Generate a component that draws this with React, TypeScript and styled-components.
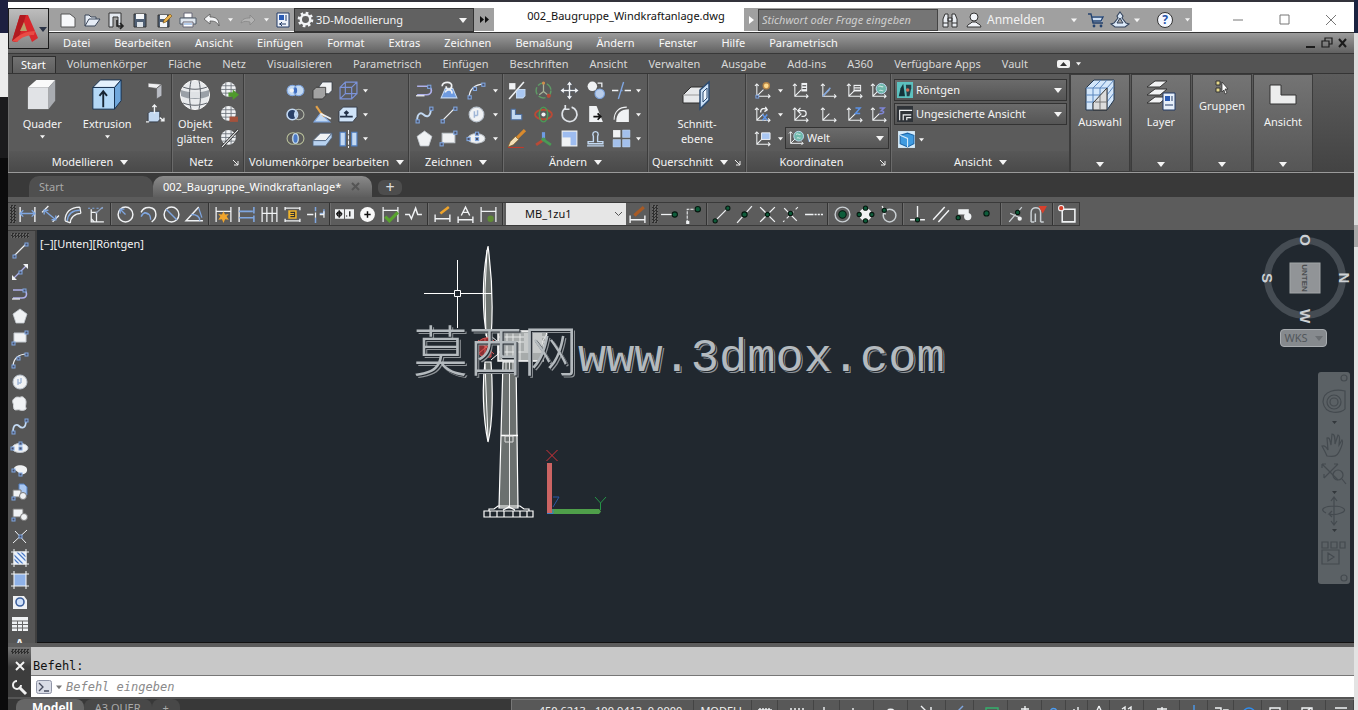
import React from "react";
import styled, { createGlobalStyle, css } from "styled-components";

const GlobalStyle = createGlobalStyle`
  *, *::before, *::after { box-sizing: border-box; }
  body {
    margin: 0;
    background: #3a3a3a;
    color: #eee;
    font: 11px/16px "Noto Sans", "Open Sans", sans-serif;
  }
  button, select, input {
    margin: 0; padding: 0; border: 0; border-radius: 0; background: none;
    color: inherit; font: inherit; outline: 0;
  }
  svg { display: block; flex: none; }
`;

/* ------------------------------------------------------------------ icons */

const W = "#f0f2f4";
const L = "#c3d9f2";
const B = "#7fa6e0";
const D = "#2b3340";
const G = "#0d5c3a";
const P = "#aeb0ea";

const line = (d: string, stroke = W, width = 1.2) => (
  <path d={d} fill="none" stroke={stroke} strokeWidth={width} />
);
const dot = (x: number, y: number, r = 2) => (
  <circle cx={x} cy={y} r={r} fill={G} stroke="#06170f" strokeWidth={1} />
);
const grip = (x: number, y: number) => (
  <rect x={x - 1} y={y - 1} width={3} height={3} fill="#4b5068" stroke={B} strokeWidth={1} />
);
const ucs = (stroke = W) => line("M4 3v13h14M2 5l2-2 2 2M16 14l2 2-2 2M4 16l7-7", stroke, 1.1);

const icons: Record<string, React.ReactNode> = {
  fresh: <path d="M3 4h9l5 4v9H3z" fill="#f7f8fa" stroke="#555" />,
  open: <path d="M3 16V5h4l2 2h5v2M3 16l4-7h11l-5 7z" fill="#e6ecf5" stroke="#3b4659" />,
  saveTo: <><path d="M3 17V3h12v14h-3V7H7v10z" fill="#e4e9f0" stroke="#333" />{line("M11 10v6h5M14 13l3 3-3 3", "#222", 1.6)}</>,
  save: <><path d="M4 4h12v13H4z" fill="#4f5f74" stroke="#333" /><path d="M6 4h8v5H6z" fill="#f4f6f8" /><path d="M7 12h6v5H7z" fill="#dce2e8" /></>,
  saveAs: <><path d="M4 5h11v12H4z" fill="#4f5f74" stroke="#333" /><path d="M6 5h7v4H6zM6 12h7v5H6z" fill="#f4f6f8" /><path d="M9 13l1-3 6-6 2 2-6 6z" fill="#e8b04a" stroke="#6d4b14" strokeWidth=".6" /></>,
  print: <><path d="M6 3h8v5H6z" fill="#fff" stroke="#667" /><path d="M2 8h16v6H2z" fill="#dfe6ee" stroke="#4d5866" /><path d="M5 12h10v5H5z" fill="#fff" stroke="#667" /><path d="M6 14h8" stroke="#6d9bd8" /></>,
  undo: <path d="M2 9l6-5v3c6 0 9 2 9 9-2-4-4-5-9-5v3z" fill="#f4f5f7" stroke="#555" strokeWidth=".8" />,
  redo: <path d="M17 10l-5-5v3c-5 0-8 1-9 5 3-2 5-2 9-1v3z" fill="#b3b3b3" stroke="#868686" strokeWidth=".8" />,
  sheet: <><path d="M4 3h12v14H4z" fill="#eef3fb" stroke="#223a66" /><path d="M6 5h5v5H6z" fill="#2a5bb5" /><path d="M13 5v6M6 14h7M9 12l-2 2 2 2" fill="none" stroke="#223a66" /></>,
  gear: <><circle cx="10" cy="10" r="5" fill="none" stroke="#f2f4f6" strokeWidth="2.6" /><circle cx="10" cy="10" r="7" fill="none" stroke="#f2f4f6" strokeWidth="2.6" strokeDasharray="2.8 2.7" /></>,
  find: <path d="M3 17V9l2-5h3v13zM12 17V4h3l2 5v8zM8 8h4v3H8zM3 13h5M12 13h5" fill="#e9edf2" stroke="#333" />,
  user: <><circle cx="10" cy="7" r="4" fill="#f2f5fa" stroke="#333" /><path d="M3 17c0-3 4-3 5-5h4c1 2 5 2 5 5z" fill="#f2f5fa" stroke="#333" /></>,
  cart: <><path d="M5 6h12l-1 6H7z" fill="#cfe0f5" /><path d="M2 4h3l2 9h10M6 7h11l-2 4H7" fill="none" stroke="#24426e" strokeWidth="1.3" /><circle cx="8" cy="16" r="1.4" fill="#24426e" /><circle cx="15" cy="16" r="1.4" fill="#24426e" /></>,
  exchange: (
    <>
      <path d="M10 2l3 4-1 2 4 5 3 1-4 3H5l-4-3 3-1 4-5-1-2z" fill="#dce9f8" stroke="#33435c" strokeWidth="1.1" />
      <path d="M10 8l-3 5h6z" fill="#a0a0a0" stroke="#33435c" />
    </>
  ),

  sweep: <><path d="M3 3l13 1-5 4-8-1z" fill="#f0f0f2" stroke="#555" strokeWidth=".6" /><path d="M11 8l5-4v11l-5 3z" fill="#b9bcc4" stroke="#555" strokeWidth=".6" /></>,
  pressPull: <><path d="M3 9l2-2h9v8l-2 2H3z" fill={L} stroke={D} strokeWidth=".8" />{line("M9 9V1M7 3l2-2 2 2M1 17h3M14 13l4 3M18 13v3h-3", W, 1.3)}</>,
  meshMore: <><Globe /><path d="M9 12h4v-3l6 5-6 5v-3H9z" fill="#4f9a2c" /></>,
  meshLess: <><Globe /><path d="M10 12h8v5h-8z" fill="#a5523c" /></>,
  meshCrease: <><Globe />{line("M3 18L18 2", "#222", 2.4)}{line("M3 18L18 2", W, 1)}</>,

  union: <><circle cx="7" cy="10" r="5" fill={L} stroke={B} /><circle cx="13" cy="10" r="5" fill={L} stroke={B} /><ellipse cx="10" cy="10" rx="1.500" ry="3" fill="#3d6cc0" /><circle cx="6.500" cy="10" r="2" fill={W} /></>,
  subtract: <><circle cx="13" cy="10" r="5" fill="none" stroke="#b7bcae" /><circle cx="7" cy="10" r="5" fill="#2a4168" stroke={L} strokeWidth="1.500" /><path d="M10 6c-2 3-2 5 0 8 2-3 2-5 0-8z" fill={L} /></>,
  intersect: <><circle cx="7.500" cy="10" r="5.500" fill="none" stroke="#b9c09a" /><circle cx="12.500" cy="10" r="5.500" fill="none" stroke="#b9c09a" /><ellipse cx="10" cy="10" rx="2.500" ry="4.500" fill="#4b79c4" stroke={L} /></>,
  thicken: <><path d="M7 6l3-4h9v8l-3 3H7z" fill={W} stroke={D} strokeWidth=".7" /><path d="M1 10l3-3h9v8l-3 3H1z" fill="#a2a2a2" stroke="#333" strokeWidth=".8" /></>,
  slice: <><path d="M2 17l6-8 9 8z" fill={L} stroke={B} />{line("M4 2l4 6 4 4", "#e3a24a", 2)}{line("M8 9l10 5", W, 1.6)}</>,
  imprint: <><path d="M1 12l7-7h11l-6 7z" fill={W} stroke="#50647f" strokeWidth=".8" /><path d="M1 12h12l6-7v4l-6 8H1z" fill="#b8d2f0" stroke="#50647f" strokeWidth=".8" /></>,
  wireBox: line("M2 7h11v11H2zM7 2h11v11H7zM2 7l5-5M13 7l5-5M13 18l5-5M2 18l5-5", "#7c93d9", 1.1),
  extrudeFace: <><path d="M1 7l4-4h13v9l-4 5H1z" fill="#cfe3f8" stroke={D} strokeWidth=".8" />{line("M2 12h12M8 12V7M6 9l2-2 2 2", "#23324a", 1.6)}</>,
  mirrorAxis: <><path d="M2 4h5v13H2zM13 4h5v13h-5z" fill={L} stroke="#4e7fc4" /><path d="M10 2v17" stroke={W} strokeDasharray="4 1" /></>,

  polyline: <>{line("M3 6h9c6 0 6 8 0 8H3", P, 1.6)}{line("M2 15h8", W, 1.2)}{grip(14, 6)}</>,
  helix: <><path d="M3 17l4-9h7l4 9z" fill="#6e9be0" stroke={L} />{line("M4 6c0-5 10-5 9 0s-6 3-5 0M7 12c0-4 8-3 6 1", W, 1.6)}</>,
  arc: <>{line("M3 17C3 9 8 4 17 4", W, 1.2)}{grip(3, 16)}{grip(8, 8)}{grip(16, 4)}</>,
  spline: <>{line("M3 16c0-8 4-8 6-6s7 4 7-6", L, 1.8)}{grip(3, 16)}{grip(16, 4)}</>,
  line: <>{line("M4 16L16 4", W, 1.2)}{grip(4, 16)}{grip(16, 4)}</>,
  xline: <>{line("M3 17L17 3", P, 1.2)}<path d="M2 18v-5l5 5zM18 2v5l-5-5z" fill={W} />{grip(10, 10)}</>,
  circle: <><circle cx="10" cy="10" r="7" fill={W} stroke="#b9c2cc" /><path d="M8 7v6M11 6v5M8 11h3" stroke="#9fb6d6" strokeWidth="1.4" fill="none" /></>,
  polygon: <path d="M10 3l7 5-3 9H6L3 8z" fill={W} stroke="#c4cad0" strokeWidth=".8" />,
  rect: <><path d="M4 5h12v9H4z" fill={W} stroke="#c4cad0" />{grip(3, 15)}{grip(16, 4)}</>,
  ellipse: <><ellipse cx="10" cy="10" rx="8" ry="4.500" fill={W} stroke="#c4cad0" />{grip(10, 10)}{grip(2, 10)}{grip(10, 5)}</>,
  ellipseArc: <><path d="M4 9c0-5 12-5 13 0s-6 7-8 4z" fill={W} />{grip(3, 10)}{grip(10, 14)}</>,
  cloud: <path d="M5 4c2-2 4 0 6-1s5 2 5 5-1 4 0 6-4 3-6 2-5 1-6-1 0-4-1-6 0-4 2-5z" fill={W} stroke="#cfd2d6" />,
  insert: <><path d="M9 2h5l3 3v8H9z" fill="#a9c7f2" stroke="#5580c0" /><path d="M3 8h8v7H3z" fill={W} stroke="#777" /><circle cx="13" cy="14" r="3.500" fill={W} stroke="#777" />{grip(3, 16)}</>,
  block: <><path d="M3 5h10v8H3z" fill={W} stroke="#777" /><circle cx="14" cy="13" r="3.500" fill={W} stroke="#777" />{grip(3, 15)}</>,
  point: <>{line("M3 17L17 4M5 5l11 12", W, 1)}{grip(10, 10)}</>,
  hatch: <><path d="M4 4h12v12H4z" fill="#e9f1fc" stroke={W} />{line("M4 7l9 9M7 4l9 9M11 4l5 5M4 11l5 5", "#4b79c4", 1.2)}{line("M1 4h18M4 1v18M16 1v18M1 16h18", W, 1)}</>,
  gradient: <><path d="M4 4h12v12H4z" fill="#8fb2e8" />{line("M1 4h18M4 1v18M16 1v18M1 16h18", W, 1.1)}</>,
  region: <><path d="M3 4h11l3 4v9H3z" fill={W} /><circle cx="10" cy="10" r="4" fill="#cfe0f8" stroke="#3c5f9c" strokeWidth="1.6" /></>,
  table: <><path d="M2 3h16v14H2z" fill={W} /><path d="M2 7h16M2 10.500h16M2 14h16M7.500 7v10M12.500 7v10" stroke="#666" /></>,

  stretch: <><path d="M3 3h6v6H3z" fill={W} />{line("M17 2L3 18", W, 1.5)}<path d="M10 11l2-2h6v6l-2 2h-6z" fill="#a9c7f2" stroke={L} /></>,
  rotate3d: <><circle cx="10" cy="10" r="7" fill="none" stroke="#5f9a66" strokeWidth="1.400" strokeDasharray="7 2" />{line("M10 2v9l5 4M10 11l-4 3", "#a8b39a")}<circle cx="15" cy="15" r="2" fill="#b94a36" /><circle cx="10" cy="3" r="1.500" fill="#d08a4a" /></>,
  move: <path d="M10 1l3 4h-2v4h4V7l4 3-4 3v-2h-4v4h2l-3 4-3-4h2v-4H5v2l-4-3 4-3v2h4V5H7z" fill={W} stroke={D} strokeWidth=".5" />,
  copy: <><circle cx="7" cy="6" r="4.500" fill={W} /><circle cx="14" cy="13" r="4.500" fill="#b9cdea" stroke={B} />{line("M12 3h4v4", W)}</>,
  trim: <>{line("M1 10h6M13 10h6", W, 1.3)}{line("M12 2L7 18M9 10h2", B, 1.3)}</>,
  alignL: <path d="M5 5h4v5h6v5H5z" fill={L} stroke="#4d6fa0" />,
  orbit: <><ellipse cx="10" cy="10" rx="8" ry="4.500" fill="none" stroke="#b94a36" strokeWidth="1.800" /><ellipse cx="10" cy="10" rx="4" ry="7" fill="none" stroke="#4a9b55" strokeWidth="1.300" /><circle cx="10" cy="10" r="2" fill={W} /></>,
  rotate: line("M6 4a7 7 0 1 0 6-1M6 1v4h4", "#dfe3e8", 1.6),
  stretchFace: <><path d="M4 2h7l6 15H4z" fill={W} />{line("M8 12h7M12 9l3 3-3 3", "#111", 1.6)}</>,
  fillet: <><path d="M5 17C5 9 9 5 17 5v12z" fill={W} />{line("M3 15C3 7 8 3 15 3", W, 1)}</>,
  brush: <>{line("M18 2l-8 8", "#d98a2d", 3)}<path d="M9 8l3 3-5 5-5 2 2-5z" fill="#f2dfb8" stroke="#7c5a1c" strokeWidth=".6" />{line("M2 18.500h15", "#c0392b", 1)}</>,
  axes: <>{line("M10 4v7", "#6f9be4", 3)}{line("M9 12l-6 4", "#b94a36", 2.600)}{line("M11 12l6 4", "#4a9b55", 2.600)}<circle cx="10" cy="11" r="2" fill="#4a9b55" /></>,
  scale: <><path d="M3 3h14v14H3z" fill="#9dbcf0" stroke={W} /><path d="M3 9h8v8H3z" fill={W} /></>,
  stamp: line("M2 17h16M3 13h5V8c-3-6 7-6 4 0v5h5v2H3z", L, 1.3),
  array: <><path d="M2 2h7v7H2z" fill={W} /><path d="M11 2h7v7h-7zM2 11h7v7H2zM11 11h7v7h-7z" fill="#a3c0ec" stroke={L} strokeWidth=".5" /></>,

  ucsOrigin: <>{ucs()}<circle cx="14" cy="5" r="4" fill="#f3a13c" opacity=".6" /><circle cx="14" cy="5" r="2.500" fill="#ffd98a" />{grip(4, 16)}</>,
  ucsNamed: <>{ucs()}<path d="M11 2h6v9h-6z" fill={W} /><path d="M12 5h4M12 8h4" stroke="#333" /></>,
  ucsBlue: <>{ucs()}{line("M4 16l8-9", B, 1.5)}</>,
  ucsText: <>{ucs()}<path d="M9 4h8v7H9z" fill={W} /><path d="M10 6h6M10 8.500h6" stroke="#333" /></>,
  ucsWorld: <>{ucs()}<circle cx="13" cy="8" r="5.500" fill="#6fb8ac" stroke={L} /><path d="M10 6c2-2 3 1 5 0M11 10c2-1 3 1 4 0" stroke="#e5f5ef" fill="none" /></>,
  ucsRotX: <>{ucs()}{line("M8 8c0-5 4-5 7-3M13 2l2 3-3 2", W, 1.4)}{line("M10 10l5 6M15 10l-5 6", "#5c93e6", 1.6)}</>,
  ucsPrev: <>{ucs()}{line("M8 6h5c4 0 4 6 0 6h-2M10 3L7 6l3 3", W, 1.3)}</>,
  ucsPlain: ucs(),
  ucsZ: <>{ucs()}{line("M11 3h5l-5 6h5", "#5c93e6", 1.6)}</>,
  ucs3: <>{ucs()}{line("M11 3h5l-3 3c4 0 3 4-2 3", "#7f86d8", 1.6)}</>,
  ucsFace: <>{ucs()}<path d="M9 4h9v7H9z" fill="#a9c7f2" stroke={W} /></>,
  swatch: <><path d="M1 1h18v18H1z" fill="#5cc1bf" /><path d="M3 17l2-9 3-5 2 14z" fill="#14343a" /><path d="M11 4h6v4l-2 9h-3z" fill="#233f46" /><circle cx="13" cy="10" r="2" fill="#d06a54" /></>,
  views: <><path d="M1 1h18v18H1z" fill="#2f3338" />{line("M4 17V6h14M8 17v-6h9M12 17v-3h5", W, 1.3)}</>,
  cube: <><path d="M2 2h16v16H2z" fill="#d7ecfa" /><path d="M4 6l7-2 6 2v8l-6 3-7-3z" fill="#3f9be0" stroke="#1d66a8" /><path d="M4 6l7 3v8" stroke="#d7ecfa" fill="none" /></>,

  dimLinear: <>{line("M3 3v14M17 3v14", W, 1.3)}{line("M3 9h14M6 6L3 9l3 3M14 6l3 3-3 3", B, 1.3)}</>,
  dimAligned: <>{line("M2 8l6-6M12 17l6-6", W, 1.3)}{line("M4 6l11 9M4 10V6h4M15 11v4h-4", B, 1.3)}</>,
  dimArc: <>{line("M2 16C2 8 7 3 16 3M7 18c0-5 4-9 10-9M2 16l5 2M16 3l1 6", W, 1.2)}{line("M4 16C5 9 9 6 16 6", B, 1.3)}</>,
  dimOrdinate: <>{line("M5 5v12h12M8 17l-3-3M5 8h5v9", W, 1.2)}{line("M9 9l7-6", "#9aa7bd", 1.2)}<path d="M2 4h16" stroke={B} strokeDasharray="2 2" /></>,
  dimRadius: <><circle cx="10" cy="10" r="7" fill="none" stroke={W} strokeWidth="1.400" />{line("M10 10L5 5M5 9V5h4", B)}</>,
  dimJog: <>{line("M3 8C6 1 17 2 17 10c0 3-1 5-4 7", W, 1.4)}{line("M3 12c3-6 9-4 9 3M6 8l4 2", B, 1.3)}</>,
  dimDiameter: <><circle cx="10" cy="10" r="7" fill="none" stroke={W} strokeWidth="1.400" />{line("M5 5l10 10", B, 1.3)}</>,
  dimAngular: <>{line("M14 3L2 16h16", W, 1.4)}{line("M7 10c6 0 8 3 8 6M14 4l3 9", B, 1.2)}</>,
  dimQuick: <>{line("M3 3v14M17 3v14M3 7h14", W, 1.2)}<path d="M10 7l1.500 3 3.500-.5-2 2.500 2 3-3.500-.5L10 18l-1.500-3.500L5 15l2-3-2-2.500 3.500.5z" fill="#f0a52c" /></>,
  dimBaseline: <>{line("M3 3v14", W, 1.3)}{line("M3 7h13M3 13h14M17 3v6M17 11v6", B, 1.5)}</>,
  dimContinue: line("M3 3v14M7.500 3v14M12.500 3v14M17 3v14M3 9h14", W, 1.2),
  dimSpace: <>{line("M3 3v3M17 3v3M3 14v3M17 14v3M3 4h14M3 16h14", W, 1.3)}<path d="M6 6h8v8H6z" fill="#f0b52c" /><path d="M8 8h4v4H8M8 10h4" stroke="#333" fill="none" /></>,
  dimBreak: <>{line("M10 3v4M10 13v5M14 9h4v-4", B, 1.4)}{line("M2 10h6M10 8v5M14 10h4M18 7v6", W, 1.2)}</>,
  tolerance: <><path d="M1 5h8.500v9H1zM10.500 5H19v9h-8.500z" fill={W} /><circle cx="5" cy="9.500" r="2" fill="none" stroke="#111" /><path d="M5 6v7M2 9.500h6M15 7v5M12 11v1" stroke="#111" strokeWidth="1.200" /></>,
  centerMark: <><circle cx="10" cy="10" r="7" fill="#fafafa" /><path d="M10 7v6M7 10h6" stroke="#111" strokeWidth="1.400" /></>,
  inspect: <>{line("M3 3v14M17 3v14M3 6h14", W, 1.2)}{line("M5 12l4 4 8-8", "#58a32f", 3)}</>,
  jogLine: line("M2 10h4l2 4 4-10 2 6h4", W, 1.4),
  dimEdit: <>{line("M3 10v7M17 10v7M3 14h14", W, 1.3)}{line("M8 9l8-6", "#f0a52c", 2.400)}</>,
  dimText: line("M3 12v6M17 12v6M3 15h14M6 11l4-8 4 8M7 8h6", W, 1.300),
  dimUpdate: <>{line("M3 3v14M17 3v14M3 7h14", W, 1.200)}<circle cx="12" cy="14" r="3" fill="#5f8a35" /></>,
  dimStyle: <>{line("M3 11v7M17 11v7M3 15h14", W, 1.300)}{line("M7 11l9-8", "#a85a24", 3)}</>,

  snapTrack: <>{line("M2 10h14", W, 1.2)}{dot(15, 10, 2.500)}</>,
  snapFrom: <><path d="M5 18V5h8" stroke={W} strokeDasharray="3 1" fill="none" /><path d="M4 16h3v3H4z" fill={W} />{dot(15, 5, 2.500)}</>,
  snapEnd: <>{line("M4 16L16 4")}{dot(4, 16)}{dot(16, 4)}</>,
  snapMid: <>{line("M3 18L17 2")}{dot(10, 10, 2.500)}</>,
  snapCross: <>{line("M3 3l14 14M17 3L3 17")}{dot(10, 10)}</>,
  snapApparent: <>{line("M4 4l12 12")}<path d="M17 3L3 17" stroke={W} strokeDasharray="3 3" />{dot(10, 9)}</>,
  snapExt: <path d="M2 10h8M11 10h2M14 10h2M17 10h2" stroke={W} strokeWidth="1.200" />,
  snapCenter: <><circle cx="10" cy="10" r="7" fill="none" stroke="#c9cfd3" strokeWidth="1.300" /><circle cx="10" cy="10" r="3.500" fill={G} stroke="#06170f" /></>,
  snapQuad: <><circle cx="10" cy="10" r="6" fill={W} />{dot(10, 4)}{dot(10, 16)}{dot(4, 10)}{dot(16, 10)}</>,
  snapTan: <><circle cx="11" cy="11" r="6" fill="none" stroke="#c9cfd3" strokeWidth="1.400" />{line("M4 2l3 8")}{dot(6, 6)}</>,
  snapPerp: <>{line("M10 2v12M3 15h14", W, 1.300)}{dot(10, 15)}</>,
  snapPar: line("M3 15L14 3M8 17L18 6", W, 1.400),
  snapInsert: <><path d="M5 5h10v5H5z" fill={W} /><circle cx="14" cy="12" r="3.500" fill={W} />{dot(5, 13)}</>,
  snapNode: dot(10, 9, 2.500),
  snapNear: <>{line("M4 17L16 3M5 9l9 4", "#c9cfd3")}{dot(12, 8)}<circle cx="14" cy="14" r="2" fill={W} /></>,
  snapNone: <>{line("M3 17V8c0-6 9-6 9 0v9M7 17V9M3 17h3M12 17h3", "#c9cfd3", 1.400)}<path d="M10 2h8l-4 7z" fill="#d8402c" /></>,
  snapSettings: <><path d="M5 5h12v12H5z" fill="none" stroke={W} strokeWidth="1.500" /><circle cx="4" cy="4" r="2.500" fill="#d8402c" stroke={W} /></>,
};

function Globe() {
  return (
    <>
      <circle cx="9" cy="9" r="7" fill={W} />
      <path d="M2 9h14M3 5.500h12M3 12.500h12M6.500 2.500v13M11.500 2.500v13" stroke="#6a7078" strokeWidth=".8" fill="none" />
    </>
  );
}

const Glyph = styled.svg`
  overflow: visible;
`;

function Icon({ name, size = 19 }: { name: string; size?: number }) {
  return (
    <Glyph width={size} height={size} viewBox="1 1 18 18" aria-hidden="true">
      {icons[name]}
    </Glyph>
  );
}

function Caret({ size = 6, color = "#f4f4f4" }: { size?: number; color?: string }) {
  return (
    <svg width={size} height={size} viewBox="0 0 8 8" aria-hidden="true">
      <path d="M0 2h8L4 7z" fill={color} />
    </svg>
  );
}

/* ------------------------------------------------------------------ shell */

const Desktop = styled.div`
  display: flex;
  height: 100vh;
  overflow: hidden;
`;
const LeftEdge = styled.div`
  width: 8px;
  flex: none;
  background: linear-gradient(#1d2040 0 33px, #ececec 33px 97px, #1b1b1d 97px 158px, #0b0b0c 158px);
`;
const RightEdge = styled.div`
  width: 4px;
  flex: none;
  background: linear-gradient(#1a2340 0 33px, #dcdcdc 33px 225px, #a9a9a9 225px 247px, #e3e3e3 247px);
`;
const Window = styled.main`
  position: relative;
  flex: 1;
  min-width: 0;
  display: flex;
  flex-direction: column;
  background: #585858;
`;

/* --------------------------------------------------------------- title bar */

const TitleBar = styled.header`
  display: flex;
  height: 33px;
  padding: 6px 0 1px;
  background: #fff;
  border-top: 2px solid #33333b;
  border-bottom: 1px solid #333;
  flex: none;
`;
const AppButton = styled.button`
  position: absolute;
  left: 0;
  top: 8px;
  width: 41px;
  height: 41px;
  z-index: 2;
  display: flex;
  align-items: center;
  justify-content: center;
  border: 1px solid #1a1a1a;
  background: linear-gradient(#bdbdbd, #868686);
`;
const GrayStrip = styled.div<{ $lead?: boolean }>`
  display: flex;
  align-items: center;
  background: #a0a0a0;
  padding-left: ${(p) => (p.$lead ? "48px" : "0")};
`;
const BarButton = styled.button<{ $w?: number }>`
  display: flex;
  align-items: center;
  justify-content: center;
  width: ${(p) => p.$w ?? 24}px;
  height: 24px;
`;
const Workspace = styled.div`
  display: flex;
  align-items: center;
  gap: 2px;
  width: 180px;
  height: 24px;
  padding: 0 6px 0 2px;
  border: 1px solid #333;
  background: #616161;
`;
const PlainSelect = styled.select`
  appearance: none;
  flex: 1;
  min-width: 0;
  color: #f4f4f4;
`;
const DocTitle = styled.h1`
  margin: 0;
  width: 250px;
  padding-left: 14px;
  font-size: 11px;
  line-height: 16px;
  font-weight: 400;
  text-align: center;
  white-space: nowrap;
  color: #111;
`;
const Search = styled.input`
  width: 180px;
  height: 22px;
  padding: 0 3px;
  border: 1px solid #444;
  background: #757575;
  font-style: italic;
  &::placeholder { color: #cfcfcf; opacity: 1; }
`;
const SignIn = styled.button`
  display: flex;
  align-items: center;
  justify-content: space-between;
  width: 98px;
  height: 24px;
  padding: 0 7px 0 1px;
  font-size: 12px;
  color: #f2f2f2;
`;
const HelpMark = styled.span`
  width: 16px;
  height: 16px;
  margin-left: 6px;
  border-radius: 50%;
  background: #f5f8ff;
  border: 1px solid #333;
  color: #2452a8;
  font-size: 12px;
  font-weight: 700;
  line-height: 14px;
  text-align: center;
`;
const WindowButtons = styled.div`
  display: flex;
  margin-left: auto;
`;

/* ------------------------------------------------------------------ menus */

const MenuBar = styled.nav`
  display: flex;
  align-items: center;
  gap: 24px;
  height: 21px;
  padding: 0 4px 0 55px;
  flex: none;
  background: linear-gradient(#9c9c9c, #616161);
  border-bottom: 1px solid #383838;
`;
const MenuLink = styled.button`
  white-space: nowrap;
  color: #f8f8f8;
`;
const DocButtons = styled.div`
  display: flex;
  gap: 2px;
  margin-left: auto;
`;
const TabBar = styled.nav`
  display: flex;
  height: 19px;
  padding-left: 4px;
  flex: none;
  background: #545454;
`;
const RibbonTab = styled.button<{ $active?: boolean }>`
  padding: 0 11px 0 10px;
  white-space: nowrap;
  color: #d8d8d8;
  ${(p) =>
    p.$active &&
    css`
      padding: 0 9px 2px 8px;
      margin: 2px 1px 0 0;
      color: #fff;
      border: 1px solid #2e2e2e;
      border-bottom: 0;
      background: linear-gradient(#727272, #5e5e5e);
    `}
`;
const RibbonToggle = styled.button`
  display: flex;
  align-items: center;
  gap: 6px;
  margin-left: 18px;
`;

/* ----------------------------------------------------------------- ribbon */

const Ribbon = styled.section`
  display: flex;
  height: 100px;
  flex: none;
  background: linear-gradient(#5c5c5c, #434343);
  border-top: 1px solid #353535;
  border-bottom: 1px solid #9a9a9a;
`;
const Panel = styled.section<{ $w: number }>`
  display: flex;
  flex-direction: column;
  width: ${(p) => p.$w}px;
  flex: none;
  background: #5b5b5b;
  border-right: 1px solid #3c3c3c;
  border-left: 1px solid #6a6a6a;
`;
const PanelBody = styled.div<{ $pad?: number }>`
  display: flex;
  flex: 1;
  padding: 4px 0 0 ${(p) => p.$pad ?? 0}px;
`;
const PanelFoot = styled.button<{ $launch?: boolean }>`
  position: relative;
  display: flex;
  align-items: center;
  justify-content: center;
  gap: 7px;
  height: 21px;
  padding-right: ${(p) => (p.$launch ? "14px" : "0")};
  color: #f4f4f4;
  white-space: nowrap;
  background: linear-gradient(#585858, #494949);
`;
const Launcher = styled.span`
  position: absolute;
  right: 4px;
  top: 9px;
`;
const BigButton = styled.button<{ $w: number }>`
  display: flex;
  flex-direction: column;
  align-items: center;
  gap: 3px;
  width: ${(p) => p.$w}px;
  height: 70px;
  padding-top: 1px;
  line-height: 15px;
  color: #f4f4f4;
`;
const BigLabel = styled.span`
  margin-top: 2px;
`;
const IconGrid = styled.div<{ $cols: string }>`
  display: grid;
  grid-template-columns: ${(p) => p.$cols};
  grid-auto-rows: 24px;
  align-content: start;
`;
const Tool = styled.button`
  display: flex;
  align-items: center;
  justify-content: center;
`;
const Combo = styled.div<{ $span?: boolean }>`
  display: flex;
  align-items: center;
  gap: 3px;
  height: 22px;
  padding: 0 4px 0 2px;
  border: 1px solid #333;
  background: linear-gradient(#6b6b6b, #555);
  ${(p) => p.$span && "grid-column: 3 / span 4; margin-top: 1px;"}
`;
const ViewStack = styled.div`
  display: flex;
  flex-direction: column;
  gap: 2px;
  width: 173px;
  padding-top: 1px;
  margin-left: 2px;
`;
const Collapsed = styled.button`
  display: flex;
  flex-direction: column;
  align-items: center;
  justify-content: space-between;
  width: 60px;
  margin-right: 1px;
  padding: 4px 0 3px;
  flex: none;
  color: #f4f4f4;
  border: 1px solid #3c3c3c;
  background: linear-gradient(#747474, #565656);
`;
const CollapsedTop = styled.span`
  display: flex;
  flex-direction: column;
  align-items: center;
  gap: 3px;
`;

/* -------------------------------------------------------------- file tabs */

const FileTabs = styled.nav`
  display: flex;
  align-items: flex-end;
  height: 24px;
  padding-left: 21px;
  flex: none;
  background: #393939;
`;
const FileTab = styled.button<{ $active?: boolean; $w: number }>`
  display: flex;
  align-items: center;
  justify-content: space-between;
  width: ${(p) => p.$w}px;
  height: 21px;
  padding: 0 12px 0 10px;
  white-space: nowrap;
  border-radius: 10px 10px 0 0;
  color: ${(p) => (p.$active ? "#fff" : "#a8a8a8")};
  background: ${(p) => (p.$active ? "linear-gradient(#8a8a8a, #5e5e5e)" : "#4f4f4f")};
`;
const AddTab = styled.button`
  width: 24px;
  height: 15px;
  margin: 0 0 2px 6px;
  border-radius: 6px;
  background: #4d4d4d;
  font-size: 16px;
  line-height: 13px;
  color: #ddd;
`;

/* --------------------------------------------------------------- toolbars */

const ToolRow = styled.div`
  display: flex;
  height: 33px;
  padding: 5px 0 4px;
  flex: none;
  background: #5c5c5c;
`;
const ToolGroup = styled.div`
  display: flex;
  align-items: center;
  border: 1px solid #3a3a3a;
  border-left: 0;
  height: 24px;
`;
const Grip = styled.span<{ $flat?: boolean }>`
  width: ${(p) => (p.$flat ? "18px" : "6px")};
  height: ${(p) => (p.$flat ? "5px" : "18px")};
  margin: ${(p) => (p.$flat ? "2px 3px 1px" : "0 0 0 2px")};
  flex: none;
  background: repeating-conic-gradient(#2f2f2f 0 25%, #666 0 50%) 0 0 / 3px 3px;
`;
const SmallTool = styled(Tool)`
  width: 23px;
  height: 22px;
  flex: none;
`;
const Divider = styled.span`
  width: 2px;
  height: 22px;
  margin: 0 2px;
  background: #333;
  border-right: 1px solid #6e6e6e;
  flex: none;
`;
const DimStyle = styled.div`
  display: flex;
  align-items: center;
  width: 120px;
  height: 22px;
  padding: 0 3px 0 19px;
  background: #e6e6e6;
`;
const DarkSelect = styled(PlainSelect)`
  color: #111;
`;
const Workbench = styled.div`
  display: flex;
  flex: 1;
  min-height: 0;
`;
const SideTools = styled.aside`
  display: flex;
  flex-direction: column;
  align-items: center;
  width: 29px;
  padding-right: 4px;
  flex: none;
  overflow: hidden;
  background: #555;
  border-right: 2px solid #3f3f3f;
  border-top: 1px solid #3a3a3a;
`;
const SideTool = styled(Tool)`
  width: 24px;
  height: 22px;
  flex: none;
`;
const TextTool = styled(SideTool)`
  height: 16px;
  font-weight: 700;
`;

/* ---------------------------------------------------------------- drawing */

const Canvas = styled.section`
  position: relative;
  flex: 1;
  min-width: 0;
  overflow: hidden;
  background: #21282f;
  border-bottom: 1px solid #111;
`;
const ViewLabel = styled.button`
  position: absolute;
  left: 3px;
  top: 6px;
  white-space: nowrap;
  color: #f4f4f4;
`;
const Model = styled.svg`
  position: absolute;
  left: 377px;
  top: 10px;
`;
const Watermark = styled.div`
  position: absolute;
  left: 376px;
  top: 82px;
  font: 47px/70px "Liberation Mono", monospace;
  white-space: nowrap;
  color: #b4babe;
  text-shadow: 1px 1px 0 #22282f, 2px 2px 0 #8f9498;
`;
const Han = styled.span`
  font: 300 55px/70px "Noto Sans CJK SC", sans-serif;
`;
const Compass = styled.svg`
  position: absolute;
  right: 2px;
  top: 2px;
`;
const Wcs = styled.button`
  position: absolute;
  right: 27px;
  top: 99px;
  width: 47px;
  height: 18px;
  display: flex;
  align-items: center;
  justify-content: space-around;
  border: 1px solid #a9adb1;
  border-radius: 4px;
  background: #868a8e;
  color: #51565b;
`;
const NavBar = styled.div`
  position: absolute;
  right: 4px;
  top: 142px;
  width: 32px;
  height: 212px;
  border-radius: 3px;
  background: #5b6165;
`;

/* ------------------------------------------------------------ command line */

const CommandArea = styled.section`
  display: flex;
  height: 56px;
  flex: none;
  border-top: 4px solid #5c5c5c;
  border-bottom: 2px solid #555;
`;
const CommandSide = styled.div`
  display: flex;
  flex-direction: column;
  align-items: center;
  width: 23px;
  flex: none;
  background: linear-gradient(#777, #3d3d3d 40%);
`;
const CommandMain = styled.div`
  display: flex;
  flex-direction: column;
  flex: 1;
  font: 12px/16px "DejaVu Sans Mono", monospace;
`;
const History = styled.output`
  height: 29px;
  padding: 11px 2px 0;
  color: #111;
  background: #c8c8c8;
  border-bottom: 1px solid #777;
`;
const Prompt = styled.label`
  display: flex;
  align-items: center;
  gap: 4px;
  flex: 1;
  padding-left: 5px;
  background: #fff;
`;
const CommandInput = styled.input`
  flex: 1;
  color: #222;
  &::placeholder { color: #8a8a8a; font-style: italic; opacity: 1; }
`;

/* -------------------------------------------------------------- status bar */

const StatusBar = styled.footer`
  display: flex;
  align-items: flex-start;
  height: 11px;
  padding-left: 8px;
  flex: none;
  overflow: hidden;
  background: #383838;
`;
const LayoutTab = styled.button<{ $active?: boolean }>`
  height: 18px;
  padding: ${(p) => (p.$active ? "0 11px 0 16px" : "0 11px")};
  font-size: ${(p) => (p.$active ? "12px" : "11px")};
  font-weight: ${(p) => (p.$active ? 700 : 400)};
  color: ${(p) => (p.$active ? "#fff" : "#aaa")};
  background: ${(p) => (p.$active ? "#666" : "#484848")};
  border-radius: 8px 8px 0 0;
  white-space: nowrap;
`;
const StatusGroup = styled.div`
  display: flex;
  margin-left: auto;
  height: 22px;
  background: #585858;
  border-top: 1px solid #777;
  border-left: 1px solid #777;
`;
const StatusCell = styled.button<{ $w: number; $lead?: boolean }>`
  display: flex;
  justify-content: center;
  width: ${(p) => p.$w}px;
  height: 22px;
  padding: 2px 0 0 ${(p) => (p.$lead ? 16 : 0)}px;
  border-right: 1px solid #444;
  line-height: 18px;
  color: #f0f0f0;
  white-space: nowrap;
`;

/* ------------------------------------------------------------------- data */

const menus = ["Datei", "Bearbeiten", "Ansicht", "Einfügen", "Format", "Extras", "Zeichnen", "Bemaßung", "Ändern", "Fenster", "Hilfe", "Parametrisch"];
const tabs = ["Start", "Volumenkörper", "Fläche", "Netz", "Visualisieren", "Parametrisch", "Einfügen", "Beschriften", "Ansicht", "Verwalten", "Ausgabe", "Add-ins", "A360", "Verfügbare Apps", "Vault"];
const dimTools = [
  ["dimLinear", "dimAligned", "dimArc", "dimOrdinate"],
  ["dimRadius", "dimJog", "dimDiameter", "dimAngular"],
  ["dimQuick", "dimBaseline", "dimContinue", "dimSpace", "dimBreak"],
  ["tolerance", "centerMark", "inspect", "jogLine"],
  ["dimEdit", "dimText", "dimUpdate"],
];
const snapTools = [
  ["snapTrack", "snapFrom"],
  ["snapEnd", "snapMid", "snapCross", "snapApparent", "snapExt"],
  ["snapCenter", "snapQuad", "snapTan"],
  ["snapPerp", "snapPar", "snapInsert", "snapNode"],
  ["snapNear", "snapNone"],
  ["snapSettings"],
];
const sideTools = ["line", "xline", "polyline", "polygon", "rect", "arc", "circle", "cloud", "spline", "ellipse", "ellipseArc", "insert", "block", "point", "hatch", "gradient", "region", "table"];

/* ------------------------------------------------------------- components */

function Tools({ names, cols }: { names: string[]; cols: string }) {
  return (
    <IconGrid $cols={cols}>
      {names.map((n, i) => (
        <Tool key={i} aria-label={n || "mehr"}>
          {n ? <Icon name={n} /> : <Caret size={5} />}
        </Tool>
      ))}
    </IconGrid>
  );
}

function Foot({ children, menu, launch }: { children: string; menu?: boolean; launch?: boolean }) {
  return (
    <PanelFoot $launch={launch}>
      {children}
      {menu && <Caret size={8} />}
      {launch && (
        <Launcher>
          <svg width="6" height="6" viewBox="0 0 6 6">
            <path d="M0 0l5 5M5 1v4H1" stroke="#f0f0f0" fill="none" />
          </svg>
        </Launcher>
      )}
    </PanelFoot>
  );
}

function Groups({ groups }: { groups: string[][] }) {
  return (
    <>
      {groups.map((group, g) => (
        <React.Fragment key={g}>
          {g > 0 && <Divider />}
          {group.map((n) => (
            <SmallTool key={n} aria-label={n}>
              <Icon name={n} />
            </SmallTool>
          ))}
        </React.Fragment>
      ))}
    </>
  );
}

function Title() {
  return (
    <TitleBar>
      <GrayStrip $lead>
        {["fresh", "open", "saveTo", "save", "saveAs", "print", "undo"].map((n) => (
          <BarButton key={n} aria-label={n}><Icon name={n} size={18} /></BarButton>
        ))}
        <BarButton $w={12} aria-label="Rückgängig-Liste"><Caret size={5} /></BarButton>
        <BarButton aria-label="redo"><Icon name="redo" size={18} /></BarButton>
        <BarButton $w={12} aria-label="Wiederholen-Liste"><Caret size={5} /></BarButton>
        <BarButton $w={22} aria-label="sheet"><Icon name="sheet" size={18} /></BarButton>
        <Workspace>
          <Icon name="gear" size={17} />
          <PlainSelect aria-label="Arbeitsbereich"><option>3D-Modellierung</option></PlainSelect>
          <Caret size={8} />
        </Workspace>
        <BarButton $w={20} aria-label="Mehr">
          <svg width="9" height="7" viewBox="0 0 9 7"><path d="M0 0l4 3.500L0 7zM5 0l4 3.500L5 7z" fill="#111" /></svg>
        </BarButton>
      </GrayStrip>
      <DocTitle>002_Baugruppe_Windkraftanlage.dwg</DocTitle>
      <GrayStrip>
        <BarButton $w={14} aria-label="Suche einblenden">
          <svg width="5" height="8" viewBox="0 0 5 8"><path d="M0 0l5 4-5 4z" fill="#fff" /></svg>
        </BarButton>
        <Search aria-label="Suche" placeholder="Stichwort oder Frage eingeben" />
        <BarButton aria-label="Suchen"><Icon name="find" size={18} /></BarButton>
        <BarButton aria-label="Konto"><Icon name="user" size={18} /></BarButton>
        <SignIn>Anmelden<Caret size={6} /></SignIn>
        <BarButton aria-label="Store"><Icon name="cart" size={18} /></BarButton>
        <BarButton aria-label="App Store"><Icon name="exchange" size={18} /></BarButton>
        <BarButton $w={10} aria-label="App-Liste"><Caret /></BarButton>
        <BarButton $w={40} aria-label="Hilfe"><HelpMark>?</HelpMark></BarButton>
        <BarButton $w={10} aria-label="Hilfe-Liste"><Caret size={5} /></BarButton>
      </GrayStrip>
      <WindowButtons>
        {["M0 6h10", "M1 1h9v9H1z", "M1 1l10 10M11 1L1 11"].map((d) => (
          <BarButton key={d} $w={46} aria-label="Fenster">
            <svg width="12" height="12" viewBox="0 0 12 12"><path d={d} fill="none" stroke="#777" /></svg>
          </BarButton>
        ))}
      </WindowButtons>
    </TitleBar>
  );
}

function RibbonPanels() {
  return (
    <Ribbon>
      <Panel $w={164}>
        <PanelBody>
          <BigButton $w={67}>
            <svg width="32" height="32" viewBox="0 0 32 34">
              <path d="M1 9l9-8h20l-7 8z" fill="#fafafa" /><path d="M1 9h22v23H1z" fill="#e1e3e6" /><path d="M23 9l7-8v22l-7 9z" fill="#a9acb1" />
            </svg>
            <BigLabel>Quader</BigLabel>
            <Caret size={5} />
          </BigButton>
          <BigButton $w={64}>
            <svg width="34" height="32" viewBox="0 0 34 34">
              <path d="M2 9l8-8h22l-7 8z" fill="#e4f1fd" stroke="#16304f" /><path d="M2 9h23v23H2z" fill="#b3d8f7" stroke="#16304f" /><path d="M25 9l7-8v22l-7 9z" fill="#6fa7dc" stroke="#16304f" />
              <path d="M13 30V14M9 18l4-5 4 5" stroke="#182533" strokeWidth="2" fill="none" />
            </svg>
            <BigLabel>Extrusion</BigLabel>
            <Caret size={5} />
          </BigButton>
          <Tools names={["sweep", "pressPull"]} cols="32px" />
        </PanelBody>
        <Foot menu>Modellieren</Foot>
      </Panel>
      <Panel $w={72}>
        <PanelBody>
          <BigButton $w={44}>
            <svg width="32" height="32" viewBox="0 0 32 32">
              <circle cx="16" cy="16" r="14.500" fill="#e8eaec" stroke="#fafafa" />
              <path d="M2 11c8 3 20 3 28 0v6c-8 4-20 4-28 0z" fill="#9aa0a7" />
              <path d="M11 13h10v6H11z" fill="#dfe2e5" />
              <path d="M12 2c-2 9-2 19 0 28M20 2c2 9 2 19 0 28M4 8c8 3 16 3 24 0M4 24c8 3 16 3 24 0" stroke="#60656c" fill="none" />
            </svg>
            <BigLabel>Objekt<br />glätten</BigLabel>
          </BigButton>
          <Tools names={["meshMore", "meshLess", "meshCrease"]} cols="24px" />
        </PanelBody>
        <Foot launch>Netz</Foot>
      </Panel>
      <Panel $w={165}>
        <PanelBody $pad={36}>
          <Tools cols="28px 27px 24px 10px" names={["union", "thicken", "wireBox", "", "subtract", "slice", "extrudeFace", "", "intersect", "imprint", "mirrorAxis", ""]} />
        </PanelBody>
        <Foot menu>Volumenkörper bearbeiten</Foot>
      </Panel>
      <Panel $w={94}>
        <PanelBody $pad={2}>
          <Tools cols="24px 24px 32px 6px" names={["polyline", "helix", "arc", "", "spline", "line", "circle", "", "polygon", "rect", "ellipse", ""]} />
        </PanelBody>
        <Foot menu>Zeichnen</Foot>
      </Panel>
      <Panel $w={145}>
        <PanelBody>
          <Tools cols="25px 28px 24px 28px 24px 10px" names={["stretch", "rotate3d", "move", "copy", "trim", "", "alignL", "orbit", "rotate", "stretchFace", "fillet", "", "brush", "axes", "scale", "stamp", "array", ""]} />
        </PanelBody>
        <Foot menu>Ändern</Foot>
      </Panel>
      <Panel $w={98}>
        <PanelBody>
          <BigButton $w={96}>
            <svg width="32" height="32" viewBox="0 0 32 32">
              <path d="M2 16l8-8h12l-3 16H2z" fill="#e6e8ea" stroke="#2d2d2d" /><path d="M2 16h17" stroke="#999" />
              <path d="M19 11l9-8v18l-9 9z" fill="#c9dff5" stroke="#2a4a70" strokeWidth="1.500" /><path d="M22 13l4-4v10l-4 4z" fill="#eff6fd" stroke="#2a4a70" />
            </svg>
            <BigLabel>Schnitt-<br />ebene</BigLabel>
          </BigButton>
        </PanelBody>
        <Foot menu launch>Querschnitt</Foot>
      </Panel>
      <Panel $w={145}>
        <PanelBody $pad={2}>
          <IconGrid $cols="26px 10px 30px 26px 26px 22px">
            {["ucsOrigin", "", "ucsNamed", "ucsBlue", "ucsText", "ucsWorld", "ucsRotX", "", "ucsPrev", "ucsPlain", "ucsZ", "ucs3", "ucsFace", ""].map((n, i) => (
              <Tool key={i} aria-label={n || "mehr"}>{n ? <Icon name={n} size={17} /> : <Caret size={5} />}</Tool>
            ))}
            <Combo $span>
              <Icon name="ucsWorld" size={16} />
              <PlainSelect aria-label="BKS"><option>Welt</option></PlainSelect>
              <Caret size={8} />
            </Combo>
          </IconGrid>
        </PanelBody>
        <Foot launch>Koordinaten</Foot>
      </Panel>
      <Panel $w={179}>
        <PanelBody>
          <ViewStack>
            <Combo>
              <Icon name="swatch" size={16} />
              <PlainSelect aria-label="Visueller Stil"><option>Röntgen</option></PlainSelect>
              <Caret size={8} />
            </Combo>
            <Combo>
              <Icon name="views" size={16} />
              <PlainSelect aria-label="Ansicht"><option>Ungesicherte Ansicht</option></PlainSelect>
              <Caret size={8} />
            </Combo>
            <Tools cols="24px 6px" names={["cube", ""]} />
          </ViewStack>
        </PanelBody>
        <Foot menu>Ansicht</Foot>
      </Panel>
      <Collapsed>
        <CollapsedTop>
          <svg width="32" height="32" viewBox="0 0 32 32">
            <path d="M2 9l8-8h20v20l-7 10H2z" fill="#d3e6fa" stroke="#22374f" />
            <path d="M2 9h21v22M23 9l7-8M9 9v22M16 9v22M2 16h21l7-9M2 23h21l7-9M9 9l8-8M16 9l7-8" stroke="#5b86bd" fill="none" />
            <path d="M9 24L23 9v22H9z" fill="#dcdcdc" stroke="#333" /><path d="M16 17v14M11 23h12" stroke="#777" />
          </svg>
          Auswahl
        </CollapsedTop>
        <Caret size={8} />
      </Collapsed>
      <Collapsed>
        <CollapsedTop>
          <svg width="32" height="32" viewBox="0 0 32 32">
            {[18, 10, 2].map((y) => <path key={y} d={`M2 ${y + 6}l8-6h12l-7 6z`} fill="#f2f3f4" stroke="#333" />)}
            <path d="M18 14h12v17H18z" fill="#e6effa" stroke="#223a66" /><path d="M20 17h5v5h-5z" fill="#2a5bb5" /><path d="M20 26h8M27 17v5" stroke="#223a66" />
          </svg>
          Layer
        </CollapsedTop>
        <Caret size={8} />
      </Collapsed>
      <Collapsed>
        <CollapsedTop>
          <svg width="16" height="16" viewBox="0 0 16 16">
            <path d="M2 2h4v4H2zM2 9h4v4H2z" fill="#e6d98a" stroke="#333" /><path d="M8 3l6 7-3 0 2 4-2 1-1-4-2 2z" fill="#fff" stroke="#222" strokeWidth=".7" />
          </svg>
          Gruppen
        </CollapsedTop>
        <Caret size={8} />
      </Collapsed>
      <Collapsed>
        <CollapsedTop>
          <svg width="32" height="32" viewBox="0 0 32 32">
            <path d="M3 6h11v10h15v9H3z" fill="#eceded" stroke="#333" />
          </svg>
          Ansicht
        </CollapsedTop>
        <Caret size={8} />
      </Collapsed>
    </Ribbon>
  );
}

function Turbine() {
  return (
    <Model width="240" height="290" viewBox="414 240 240 290">
      <path d="M488 246c-6 30-6 65-1 92h4c2-27 1-62-3-92zM485 362c-3 24-2 55 3 80 5-20 5-54 3-80z" fill="#6c726f" stroke="#fff" strokeWidth="1.200" />
      <path d="M487 250l-2 40 1 46M485 364l3 74" stroke="#fff" fill="none" />
      <path d="M503 362h13l2 146h-19z" fill="#6b706f" stroke="#fff" strokeWidth="1.200" />
      <path d="M509.500 362v146M506 362v10M513 362v10" stroke="#e8e8e8" />
      <path d="M501 435.500h17" stroke="#fff" strokeWidth="1.600" />
      <path d="M505 436h8v6h-8z" fill="none" stroke="#ddd" />
      <path d="M484 511h49v6h-49zM489 511v-2h5l4-3h22l4 3h5v2M490 511v6M497 511v6M504 511v6M513 511v6M520 511v6M527 511v6M503 510l6-3 6 3" fill="none" stroke="#fff" strokeWidth="1.200" />
      <path d="M498 331h49l-4 30h-45z" fill="#a7abab" stroke="#fff" strokeWidth="1.400" />
      <path d="M498 337h48M498 342h47M498 352h45M502 331v30M507 331v30M513 331v30M520 331v30M547 334l-5 8 3 8" stroke="#e6e8e8" fill="none" />
      <path d="M524 333h18v18h-18z" fill="#c7caca" />
      <path d="M477 348c0-8 6-11 14-10v19c-8 1-14-2-14-9z" fill="#8c2f33" stroke="#d9504f" />
      <path d="M478 340l16 14M478 354l16-14M485 338v20" stroke="#e05a58" />
      <path d="M491 336l7 6v12l-7 6" stroke="#fff" fill="none" />
      <path d="M424 293.500h30M461 293.500h31M457.500 260v30M457.500 297v31M454.500 290.500h6v6h-6z" stroke="#fff" fill="none" />
      <path d="M547 463h5v50h-5z" fill="#cc6463" />
      <path d="M552 509h47l2 2.500-2 2.500h-47z" fill="#4f9f4a" />
      <path d="M547 513.500h6v-4" fill="none" stroke="#3c7fc9" />
      <path d="M553 497h6l-6 10" stroke="#2a57a5" fill="none" />
      <path d="M546.500 450l11 11M557.500 450l-11 11" stroke="#d3323a" fill="none" />
      <path d="M595 497l5.500 6 5.500-6M600.500 503v7" stroke="#259447" fill="none" />
    </Model>
  );
}

function ViewCube() {
  const letter = (x: number, y: number, t: string) => (
    <text
      x={0}
      y={5}
      transform={`translate(${x} ${y}) rotate(90)`}
      textAnchor="middle"
      fontSize={15}
      fontWeight={700}
      fontFamily="Liberation Sans, sans-serif"
      fill="#cdd1d4"
    >
      {t}
    </text>
  );
  return (
    <Compass width="92" height="94" viewBox="0 0 92 94">
      <circle cx="45" cy="46" r="37.500" fill="none" stroke="#454c53" strokeWidth="7" />
      <rect x="30" y="31" width="30" height="30" fill="#919497" stroke="#a2a5a7" />
      <text transform="translate(42 46) rotate(90)" textAnchor="middle" fontSize={8} fontWeight={700} fontFamily="Liberation Sans, sans-serif" fill="#4a4d50">UNTEN</text>
      {letter(45, 8, "O")}
      {letter(7, 46, "S")}
      {letter(84, 46, "N")}
      {letter(45, 84, "W")}
    </Compass>
  );
}

function Navigation() {
  return (
    <NavBar>
      <svg width="32" height="212" viewBox="0 0 32 212">
        <g fill="none" stroke="#444a4f" strokeWidth="1.200">
          <circle cx="26" cy="6" r="3" />
          <path d="M27 19v18c-3 4-20 7-22-7 0-12 14-13 22-11z" /><circle cx="16" cy="30" r="7" /><circle cx="16" cy="30" r="4" />
          <path d="M9 84c-2-5-4-8-5-10 3-1 5 2 6 4l-1-12c3-1 3 3 4 7l1-11c3 0 3 4 3 10l3-9c3 1 1 6 1 10l3-5c2 2-1 8-3 12s-4 5-12 4z" />
          <path d="M4 92l16 16M20 92L6 106M4 92h4M4 92v4M20 92h-4M6 106v-4" /><circle cx="20" cy="103" r="5" /><path d="M24 107l4 5" />
          <path d="M16 126v26M13 129l3-4 3 4M13 149l3 4 3-4M8 141c-8-4 0-7 8-7s15 4 7 7-9 1-12 1l3-3M11 142l3 3" />
          <path d="M4 170h6v6H4zM13 170h6v6h-6zM22 170h5v6h-5zM4 178h17v14H4zM10 181l6 4-6 4z" />
          <circle cx="26" cy="206" r="3" />
        </g>
        <path d="M14 49h5l-2.500 3zM14 119h5l-2.500 3zM14 157h5l-2.500 3z" fill="#33383c" />
      </svg>
    </NavBar>
  );
}

const statusIcons: [number, string, string][] = [
  [26, "M3 4v8M6 4v8M9 4v8M12 4v8M1 6h14M1 9h14", W],
  [36, "M2 5h2M6 5h2M10 5h2M14 5h2M2 8h2M6 8h2M10 8h2", W],
  [26, "M5 3v8h7", W],
  [34, "M4 4v7h8", W],
  [34, "M4 9c0-5 7-5 8 0", W],
  [38, "M2 2l9 9M12 3v8", W],
  [28, "M3 10l8-8", B],
  [34, "M3 4h12v7H3z", "#34b06c"],
  [34, "M4 5h8M8 2v8", W],
  [24, "M4 9c0-6 7-6 7 0", "#4b9bf0"],
  [22, "M5 10V5M9 10V3", W],
  [22, "M8 2l-4 9M8 2l4 9", W],
  [34, "M3 5l3-2v8M9 5l3-2v8", W],
  [36, "M3 5h10M8 3v7M5 8h6", W],
  [28, "M8 1v10", "#4b9bf0"],
  [26, "M2 4h6v6M10 6h5v5", W],
  [28, "M3 10a6 6 0 0 1 12 0", "#2f8df0"],
  [26, "M3 10V4h10v6", W],
  [38, "M3 4h10v6H3zM4 10l8-6", W],
  [28, "M3 4h12M3 8h12", W],
];

export default function App() {
  return (
    <Desktop>
      <GlobalStyle />
      <LeftEdge />
      <Window>
        <AppButton aria-label="Anwendungsmenü">
          <svg width="28" height="30" viewBox="0 0 28 30">
            <path d="M1 27L9 1h8l10 23-6 4-3-7H9l-3 7z" fill="#d8282d" />
            <path d="M9 1h6L9 20l-3 8-5-1z" fill="#b01a20" />
            <path d="M13 8l-4 9h7z" fill="#b8a06a" />
            <path d="M1 27l5-4c5-4 11-6 18-6l-1 4c-7 0-12 2-17 7z" fill="#e94b45" />
          </svg>
          <Caret size={8} color="#2b3346" />
        </AppButton>
        <Title />
        <MenuBar>
          {menus.map((m) => <MenuLink key={m}>{m}</MenuLink>)}
          <DocButtons>
            {["M1 11h9", "M1 5h7v6H1zM4 5V2h7v6H8", "M2 3l7 8M9 3l-7 8"].map((d, i) => (
              <button key={d} aria-label="Zeichnungsfenster">
                <svg width="14" height="14" viewBox="0 0 12 14"><path d={d} fill="none" stroke="#1c1c1c" strokeWidth={i === 1 ? 1.2 : 2} /></svg>
              </button>
            ))}
          </DocButtons>
        </MenuBar>
        <TabBar>
          {tabs.map((t, i) => <RibbonTab key={t} $active={i === 0}>{t}</RibbonTab>)}
          <RibbonToggle aria-label="Multifunktionsleiste minimieren">
            <svg width="13" height="8" viewBox="0 0 13 8"><rect width="13" height="8" rx="2" fill="#f2f2f2" /><path d="M3 6l3.500-4L10 6z" fill="#333" /></svg>
            <Caret size={5} />
          </RibbonToggle>
        </TabBar>
        <RibbonPanels />
        <FileTabs>
          <FileTab $w={124}>Start</FileTab>
          <FileTab $w={219} $active>
            002_Baugruppe_Windkraftanlage*
            <svg width="9" height="9" viewBox="0 0 9 9"><path d="M1 1l7 7M8 1L1 8" stroke="#555" strokeWidth="2" /></svg>
          </FileTab>
          <AddTab aria-label="Neue Zeichnung">+</AddTab>
        </FileTabs>
        <ToolRow>
          <ToolGroup>
            <Grip />
            <Groups groups={dimTools} />
            <Divider />
            <DimStyle>
              <DarkSelect aria-label="Bemaßungsstil"><option>MB_1zu1</option></DarkSelect>
              <svg width="9" height="6" viewBox="0 0 9 6"><path d="M1 1l3.500 3.500L8 1" fill="none" stroke="#555" /></svg>
            </DimStyle>
            <SmallTool aria-label="dimStyle"><Icon name="dimStyle" /></SmallTool>
          </ToolGroup>
          <ToolGroup>
            <Grip />
            <Groups groups={snapTools} />
          </ToolGroup>
        </ToolRow>
        <Workbench>
          <SideTools>
            <Grip $flat />
            {sideTools.map((n) => (
              <SideTool key={n} aria-label={n}><Icon name={n} size={18} /></SideTool>
            ))}
            <TextTool aria-label="text">A</TextTool>
          </SideTools>
          <Canvas>
            <ViewLabel>[−][Unten][Röntgen]</ViewLabel>
            <Turbine />
            <Watermark><Han>莫西网</Han>www.3dmox.com</Watermark>
            <ViewCube />
            <Wcs>WKS <Caret size={8} color="#6b6f73" /></Wcs>
            <Navigation />
          </Canvas>
        </Workbench>
        <CommandArea>
          <CommandSide>
            <Grip $flat />
            <SideTool aria-label="Schließen">
              <svg width="10" height="10" viewBox="0 0 10 10"><path d="M1 1l8 8M9 1L1 9" stroke="#f4f4f4" strokeWidth="2" /></svg>
            </SideTool>
            <SideTool aria-label="Anpassen">
              <svg width="16" height="16" viewBox="0 0 16 16"><path d="M7 7l7 7" stroke="#f0f0f0" strokeWidth="3" /><path d="M5 1a4 4 0 1 0 4 4" fill="none" stroke="#f0f0f0" strokeWidth="2" /></svg>
            </SideTool>
          </CommandSide>
          <CommandMain>
            <History>Befehl:</History>
            <Prompt>
              <svg width="16" height="14" viewBox="0 0 16 14"><rect x=".5" y=".5" width="15" height="13" rx="2" fill="#d9dce6" stroke="#8f94a6" /><path d="M3 3l4 4-4 4M8 11h5" fill="none" stroke="#444a5c" strokeWidth="1.300" /></svg>
              <Caret size={6} color="#777" />
              <CommandInput aria-label="Befehl" placeholder="Befehl eingeben" />
            </Prompt>
          </CommandMain>
        </CommandArea>
        <StatusBar>
          <LayoutTab $active>Modell</LayoutTab>
          <LayoutTab>A3 QUER</LayoutTab>
          <LayoutTab>+</LayoutTab>
          <StatusGroup>
            <StatusCell $w={182} $lead>450.6213, -100.9413, 0.0000</StatusCell>
            <StatusCell $w={58}>MODELL</StatusCell>
            {statusIcons.map(([w, d, c], i) => (
              <StatusCell key={i} $w={w} aria-label="Zeichenhilfe">
                <svg width="16" height="14" viewBox="0 -2 16 14"><path d={d} fill="none" stroke={c} strokeWidth="1.400" /></svg>
              </StatusCell>
            ))}
          </StatusGroup>
        </StatusBar>
      </Window>
      <RightEdge />
    </Desktop>
  );
}
